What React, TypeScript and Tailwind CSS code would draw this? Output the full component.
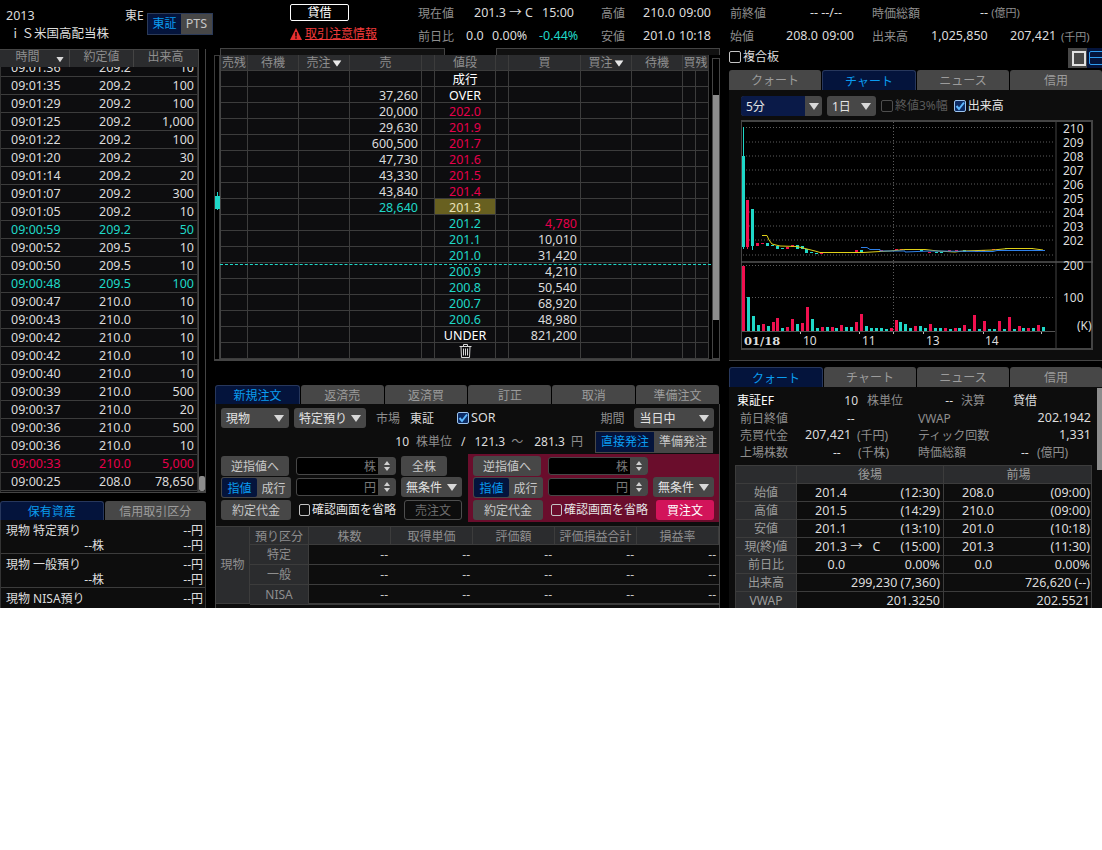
const RED = "text-[#e6004c]";
const TEAL = "text-[#1fd8c8]";

const ticks = [
  ["09:01:36", "209.2", "10"],
  ["09:01:35", "209.2", "100"],
  ["09:01:29", "209.2", "100"],
  ["09:01:25", "209.2", "1,000"],
  ["09:01:22", "209.2", "100"],
  ["09:01:20", "209.2", "30"],
  ["09:01:14", "209.2", "20"],
  ["09:01:07", "209.2", "300"],
  ["09:01:05", "209.2", "10"],
  ["09:00:59", "209.2", "50", "teal"],
  ["09:00:52", "209.5", "10"],
  ["09:00:50", "209.5", "10"],
  ["09:00:48", "209.5", "100", "teal"],
  ["09:00:47", "210.0", "10"],
  ["09:00:43", "210.0", "10"],
  ["09:00:42", "210.0", "10"],
  ["09:00:42", "210.0", "10"],
  ["09:00:40", "210.0", "10"],
  ["09:00:39", "210.0", "500"],
  ["09:00:37", "210.0", "20"],
  ["09:00:36", "210.0", "500"],
  ["09:00:36", "210.0", "10"],
  ["09:00:33", "210.0", "5,000", "red"],
  ["09:00:25", "208.0", "78,650"],
];

const board = [
  { sell: "", price: "成行", color: "text-white", buy: "" },
  { sell: "37,260", price: "OVER", color: "text-white", buy: "" },
  { sell: "20,000", price: "202.0", color: RED, buy: "" },
  { sell: "29,630", price: "201.9", color: RED, buy: "" },
  { sell: "600,500", price: "201.7", color: RED, buy: "" },
  { sell: "47,730", price: "201.6", color: RED, buy: "" },
  { sell: "43,330", price: "201.5", color: RED, buy: "" },
  { sell: "43,840", price: "201.4", color: RED, buy: "" },
  { sell: "28,640", sellColor: TEAL, price: "201.3", color: "text-[#e8e2b8]", buy: "", current: true },
  { sell: "", price: "201.2", color: TEAL, buy: "4,780", buyColor: RED },
  { sell: "", price: "201.1", color: TEAL, buy: "10,010" },
  { sell: "", price: "201.0", color: TEAL, buy: "31,420" },
  { sell: "", price: "200.9", color: TEAL, buy: "4,210" },
  { sell: "", price: "200.8", color: TEAL, buy: "50,540" },
  { sell: "", price: "200.7", color: TEAL, buy: "68,920" },
  { sell: "", price: "200.6", color: TEAL, buy: "48,980" },
  { sell: "", price: "UNDER", color: "text-white", buy: "821,200" },
  { sell: "", price: "", color: "", buy: "", trash: true },
];

// [height, red?]
const volumes: [number, number][] = [
  [65, 1], [34, 0], [15, 0], [6, 0], [7, 1], [5, 0], [9, 1], [13, 1], [3, 0], [4, 1], [12, 1], [7, 0], [8, 1], [24, 1], [12, 0], [3, 0],
  [4, 1], [4, 0], [4, 1], [3, 0], [6, 1], [4, 0], [4, 0], [9, 1], [17, 1], [5, 0], [3, 0], [3, 0], [3, 0], [2, 0], [3, 1], [11, 1],
  [9, 0], [7, 0], [3, 0], [5, 1], [5, 0], [3, 0], [7, 1], [3, 0], [3, 0], [3, 1], [2, 0], [3, 1], [3, 0], [6, 1], [2, 0], [16, 1],
  [2, 0], [10, 1], [2, 0], [2, 0], [10, 1], [2, 0], [14, 1], [2, 0], [5, 1], [3, 0], [3, 1], [3, 0], [6, 1], [4, 0],
];

// [x, y, h, red?]
const candles: [number, number, number, number][] = [
  [742, 156, 91, 0], [746, 200, 47, 1], [751, 209, 37, 0], [756, 243, 3, 1], [761, 243, 1, 1], [766, 243, 3, 0], [771, 245, 1, 0],
  [776, 246, 3, 0], [781, 248, 1, 0], [786, 247, 2, 1], [791, 245, 2, 1], [796, 245, 4, 0], [801, 246, 3, 0], [805, 249, 4, 0],
  [810, 252, 1, 0], [815, 253, 1, 0], [820, 252, 2, 1], [855, 250, 2, 1], [860, 250, 2, 0], [880, 250, 1, 1], [895, 249, 1, 1],
  [900, 249, 1, 1], [920, 250, 1, 0], [928, 252, 1, 1], [935, 252, 1, 0], [940, 252, 1, 0], [948, 250, 1, 1], [955, 250, 1, 1],
  [963, 250, 2, 0], [975, 251, 1, 1], [982, 250, 1, 1], [992, 249, 1, 1], [1005, 248, 1, 0], [1020, 248, 1, 0], [1030, 248, 1, 0],
];

const Caret = ({ className = "fill-[#d8d8d8]" }: { className?: string }) => (
  <svg width="10" height="7" viewBox="0 0 10 7" className={className}>
    <polygon points="0,0 10,0 5,7" />
  </svg>
);

const Tabs = ({ items, active, cls }: { items: string[]; active: number; cls: string }) => (
  <div className={`flex gap-[1px] ${cls}`}>
    {items.map((t, i) => (
      <div
        key={t}
        className={`flex-1 flex items-center justify-center pt-[2px] rounded-t-[3px] text-[12px] ${
          i === active ? "bg-[#04143c] border border-[#27375c] border-b-0 text-[#0a9cf0]" : "bg-[#474747] text-[#9c9c9c]"
        }`}
      >
        {t}
      </div>
    ))}
  </div>
);

const Check = ({ on, dim }: { on?: boolean; dim?: boolean }) => (
  <span
    className={`inline-flex items-center justify-center w-[12px] h-[12px] rounded-[2px] border ${
      on ? "border-[#9cc4ee] bg-[#0c2c66]" : dim ? "border-[#4e4e4e]" : "border-[#c4c4c4]"
    }`}
  >
    {on && (
      <svg width="10" height="10" viewBox="0 0 10 10" fill="none" stroke="#5cb8ff" strokeWidth="2">
        <path d="M1.5 5 L4 8 L9 1.5" />
      </svg>
    )}
  </span>
);

const Select = ({ label, cls }: { label: string; cls: string }) => (
  <div className={`flex items-center justify-between h-[20px] rounded-[3px] bg-[#474747] pl-[5px] pr-[5px] text-[12px] text-[#e4e4e4] ${cls}`}>
    <span className="pt-[2px]">{label}</span>
    <Caret />
  </div>
);

const Btn = ({ label, cls }: { label: string; cls: string }) => (
  <div className={`flex items-center justify-center pt-[2px] rounded-[3px] bg-[#474747] text-[12px] text-[#c8c8c8] ${cls}`}>{label}</div>
);

const Spin = ({ unit }: { unit: string }) => (
  <div className="flex w-[100px] h-[18px] rounded-[3px] border border-[#474747] bg-black">
    <span className="flex-1 pr-[2px] text-right text-[12px] leading-[17px] text-[#777]">{unit}</span>
    <span className="w-[17px] flex flex-col items-center justify-center gap-[2px] bg-[#474747]">
      <svg width="6" height="4" viewBox="0 0 6 4" className="fill-[#d0d0d0]">
        <polygon points="3,0 6,4 0,4" />
      </svg>
      <svg width="6" height="4" viewBox="0 0 6 4" className="fill-[#d0d0d0]">
        <polygon points="0,0 6,0 3,4" />
      </svg>
    </span>
  </div>
);

const OrderSide = ({ buy }: { buy?: boolean }) => (
  <div className={`grid grid-cols-[70px_100px_61px] gap-x-[5px] gap-y-[1px] grid-rows-[20px_21px_21px] ${buy ? "bg-[#6a0d2c] w-[251px] h-[68px] pl-[5px] pt-[2px]" : "w-[252px] h-[68px] pl-[5px] pt-[2px]"}`}>
    <Btn label="逆指値へ" cls="w-[68px] h-[20px]" />
    <div className="pt-[1px]">
      <Spin unit="株" />
    </div>
    {buy ? <div /> : <Btn label="全株" cls="w-[46px] h-[20px]" />}
    <div className="flex h-[21px] rounded-[3px] bg-[#474747] text-[12px] p-[1px]">
      <span className="w-[35px] flex items-center justify-center pt-[2px] rounded-[2px] bg-[#04143c] text-[#0a9cf0]">指値</span>
      <span className="flex-1 flex items-center justify-center pt-[2px] text-[#c8c8c8]">成行</span>
    </div>
    <div className="pt-[1px]">
      <Spin unit="円" />
    </div>
    <Select label="無条件" cls="w-[61px]" />
    <Btn label="約定代金" cls="h-[20px] mt-[1px]" />
    <div className="flex items-center gap-[2px] pl-[3px] text-[12px] text-[#e4e4e4] whitespace-nowrap">
      <Check />
      <span>確認画面を省略</span>
    </div>
    {buy ? (
      <Btn label="買注文" cls="!bg-[#d2145a] !text-white w-[58px] h-[20px] ml-[3px] mt-[1px]" />
    ) : (
      <div className="flex items-center justify-center pt-[2px] ml-[3px] w-[58px] h-[20px] mt-[1px] rounded-[3px] border border-[#4e4e4e] text-[12px] text-[#6e6e6e]">売注文</div>
    )}
  </div>
);

const QuoteRow = ({ label, a, aTime, b, bTime }: { label: string; a: string; aTime: string; b: string; bTime: string }) => (
  <div className="grid grid-cols-[61px_147px_149px] h-[18px] border-b border-[#3c3c3c] leading-[17px]">
    <div className="bg-[#2b2c2e] border-r border-[#3c3c3c] text-center text-[12px] text-[#9c9c9c]">{label}</div>
    <div className="flex justify-between border-r border-[#3c3c3c] pl-[18px] pr-[3px] text-[#dcdcdc] whitespace-pre">
      <span>{a}</span>
      <span>{aTime}</span>
    </div>
    <div className="flex justify-between pl-[18px] pr-[3px] text-[#dcdcdc]">
      <span>{b}</span>
      <span>{bTime}</span>
    </div>
  </div>
);

const Chart = () => (
  <svg width="352" height="230" viewBox="741 120 352 230" className="block">
    <rect x="741" y="121" width="351" height="228" fill="#000" stroke="#444" strokeWidth="2" />
    <line x1="1056" y1="120" x2="1056" y2="350" stroke="#444" />
    <line x1="741" y1="262" x2="1093" y2="262" stroke="#555" strokeWidth="1.5" />
    {[127.5, 142, 156, 170, 184, 198, 212, 226, 240, 255, 265.5, 297.5].map((y) => (
      <line key={y} x1="743" y1={y} x2="1055" y2={y} stroke="#5c5c5c" strokeDasharray="1 2" />
    ))}
    <line x1="893.5" y1="122" x2="893.5" y2="331" stroke="#5c5c5c" strokeDasharray="1 2" />
    <line x1="743.5" y1="127" x2="743.5" y2="249" stroke="#1fd8c8" />
    <line x1="747.5" y1="247" x2="747.5" y2="249" stroke="#f0104f" />
    <line x1="752.5" y1="246" x2="752.5" y2="250" stroke="#1fd8c8" />
    {candles.map(([x, y, h, r]) => (
      <rect key={x} x={x} y={y} width="3" height={h} fill={r ? "#f0104f" : "#1fd8c8"} />
    ))}
    <polyline
      fill="none"
      stroke="#e0d018"
      points="762,235.5 767,235.5 769,240 772,244 780,246 797,246.5 805,248.5 815,251 820,252.5 863,252.5 880,251.5 890,251 905,249.5 925,249.5 938,251 955,252 963,251 993,250 1008,248.5 1032,248.5 1043,250"
    />
    <polyline
      fill="none"
      stroke="#2f80e8"
      points="861,247.5 867,247.5 870,249.5 880,249.5 880,251 905,251 905,252 930,251 993,251.5 997,250.5 1045,250.5"
    />
    {volumes.map(([h, r], i) => (
      <rect key={i} x={742 + Math.round(i * 4.92)} y={331 - h} width="3" height={h} fill={r ? "#f0104f" : "#1fd8c8"} />
    ))}
    <line x1="742" y1="331.5" x2="1055" y2="331.5" stroke="#555" />
    {[800, 859, 893, 923, 983, 1041].map((x) => (
      <line key={x} x1={x + 0.5} y1="332" x2={x + 0.5} y2="334" stroke="#bbb" />
    ))}
    <g fill="#dcdcdc" fontSize="12">
      {[210, 209, 208, 207, 206, 205, 204, 203, 202].map((p, i) => (
        <text key={p} x="1063" y={132.5 + i * 14.1}>
          {p}
        </text>
      ))}
      <text x="1063" y="270">200</text>
      <text x="1063" y="302">100</text>
      <text x="1077" y="330">(K)</text>
      <text x="803" y="345">10</text>
      <text x="862" y="345">11</text>
      <text x="926" y="345">13</text>
      <text x="985" y="345">14</text>
      <text x="744" y="345" fontWeight="700" fontFamily="'DejaVu Serif', serif" fontSize="11.5">01/18</text>
    </g>
  </svg>
);

export default function App() {
  return (
    <div className="min-h-[850px] bg-white font-['Noto_Sans','Noto_Sans_CJK_JP',sans-serif] text-[12.5px] leading-none">
      <div className="h-[608px] overflow-hidden bg-black text-[#dcdcdc]">
        {/* top info */}
        <div className="flex h-[48px]">
          <div className="w-[125px] pl-[6px] pt-[10px]">
            <div className="h-[18px]">2013</div>
            <div className="pl-[3px] text-[12.5px] whitespace-nowrap">ｉＳ米国高配当株</div>
          </div>
          <div className="w-[22px] pt-[10px] text-[12px] whitespace-nowrap">東E</div>
          <div className="mt-[13px] flex w-[66px] h-[22px] bg-[#474747] border border-[#2b3a58]">
            <span className="w-[33px] flex items-center justify-center bg-[#04143c] text-[#0a9cf0] text-[12px]">東証</span>
            <span className="flex-1 flex items-center justify-center text-[#c8c8c8]">PTS</span>
          </div>
          <div className="w-[128px] ml-[77px] pt-[4px]">
            <div className="w-[59px] h-[17px] flex items-center justify-center rounded-[2px] border border-white text-[12px] text-white">貸借</div>
            <div className="flex items-center gap-[3px] mt-[7px] whitespace-nowrap">
              <svg width="12" height="12" viewBox="0 0 12 12">
                <polygon points="6,0 12,12 0,12" fill="#e83030" />
                <rect x="5.3" y="4" width="1.4" height="4.5" fill="#000" />
                <rect x="5.3" y="9.3" width="1.4" height="1.4" fill="#000" />
              </svg>
              <span className="text-[12px] text-[#f03a3a] underline">取引注意情報</span>
            </div>
          </div>
          <div className="flex-1 pt-[2px] whitespace-nowrap">
            <div className="flex h-[23px] items-center">
              <span className="w-[56px] text-[12px] text-[#8e8e8e]">現在値</span>
              <span className="w-[68px]">201.3 → C</span>
              <span className="w-[59px]">15:00</span>
              <span className="w-[42px] text-[12px] text-[#8e8e8e]">高値</span>
              <span className="w-[36px]">210.0</span>
              <span className="w-[51px]">09:00</span>
              <span className="w-[80px] text-[12px] text-[#8e8e8e]">前終値</span>
              <span className="w-[62px]">-- --/--</span>
              <span className="w-[108px] text-[12px] text-[#8e8e8e]">時価総額</span>
              <span>-- <span className="text-[11px] text-[#8e8e8e]">(億円)</span></span>
            </div>
            <div className="flex h-[23px] items-center">
              <span className="w-[48px] text-[12px] text-[#8e8e8e]">前日比</span>
              <span className="w-[26px]">0.0</span>
              <span className="w-[47px]">0.00%</span>
              <span className={`w-[62px] ${TEAL}`}>-0.44%</span>
              <span className="w-[42px] text-[12px] text-[#8e8e8e]">安値</span>
              <span className="w-[36px]">201.0</span>
              <span className="w-[51px]">10:18</span>
              <span className="w-[56px] text-[12px] text-[#8e8e8e]">始値</span>
              <span className="w-[36px]">208.0</span>
              <span className="w-[50px]">09:00</span>
              <span className="w-[59px] text-[12px] text-[#8e8e8e]">出来高</span>
              <span className="w-[79px]">1,025,850</span>
              <span className="w-[51px]">207,421</span>
              <span className="text-[11px] text-[#8e8e8e]">(千円)</span>
            </div>
          </div>
        </div>

        <div className="flex">
          {/* ticks + holdings */}
          <div className="w-[206px] shrink-0">
            <div className="mt-[1px] flex h-[444px] border-b-2 border-[#444]">
              <div className="w-[198px]">
                <div className="grid grid-cols-[70px_64px_63px] h-[18px] bg-[#2b2c2e] text-[12px] text-[#8e8e8e] border-t border-[#444]">
                  <div className="relative flex items-center justify-center pr-[14px] pb-[3px] border-r border-[#444]">
                    時間
                    <span className="absolute right-[4px] top-[6px]">
                      <Caret className="fill-[#d8d8d8] scale-75" />
                    </span>
                  </div>
                  <div className="flex items-center justify-center pb-[3px] border-r border-[#444]">約定値</div>
                  <div className="flex items-center justify-center pb-[3px]">出来高</div>
                </div>
                <div className="h-[425px] overflow-hidden bg-[#0d0d0f] border-l border-r border-[#333]">
                  {ticks.map((t, i) => (
                    <div
                      key={i}
                      className={`flex items-center h-[18px] border-b border-[#3c3c3c] pt-[2px] pl-[10px] pr-[3px] ${i === 0 ? "-mt-[8px]" : ""} ${
                        t[3] === "teal" ? TEAL : t[3] === "red" ? RED : "text-[#dcdcdc]"
                      }`}
                    >
                      <span className="w-[60px]">{t[0]}</span>
                      <span className="w-[60px] text-right">{t[1]}</span>
                      <span className="flex-1 text-right">{t[2]}</span>
                    </div>
                  ))}
                </div>
              </div>
              <div className="w-[8px] flex flex-col justify-end border-x border-[#444] bg-black">
                <div className="h-[15px] bg-[#8c8c8c] rounded-[2px]" />
              </div>
            </div>
            <Tabs items={["保有資産", "信用取引区分"]} active={0} cls="mt-[8px] h-[19px]" />
            <div className="h-[88px] bg-[#0d0d0d] border-l border-r border-[#333] text-[12px]">
              {["現物 特定預り", "現物 一般預り", "現物 NISA預り"].map((n, i) => (
                <div key={n} className={`pt-[2px] ${i < 2 ? "h-[34px] border-b border-[#3c3c3c]" : ""}`}>
                  <div className="flex justify-between h-[17px] items-center pl-[5px] pr-[2px]">
                    <span>{n}</span>
                    <span>--円</span>
                  </div>
                  {i < 2 && (
                    <div className="flex h-[14px] items-center pr-[2px]">
                      <span className="w-[103px] text-right">--株</span>
                      <span className="flex-1 text-right">--円</span>
                    </div>
                  )}
                </div>
              ))}
            </div>
          </div>

          {/* board + order */}
          <div className="w-[506px] ml-[8px] shrink-0">
            <div className="flex h-[7px]">
              <div className="ml-[6px] w-[225px] border-t border-x border-[#444] bg-[#111]" />
              <div className="ml-[51px] w-[224px] border-t border-x border-[#444] bg-[#111]" />
            </div>
            <div className="relative flex h-[306px] border-b-2 border-[#444]">
              <div className="relative w-[6px] border-x border-t border-[#3c3c3c]">
                <div className="absolute left-0 top-[140px] w-[5px] h-[13px] bg-[#1fd8c8]" />
                <div className="absolute left-[2px] top-[136px] w-[1px] h-[18px] bg-[#1fd8c8]" />
              </div>
              <div className="w-[488px] bg-[#0d0d0f] border-l border-[#444]">
                <div className="grid grid-cols-[27px_51px_51px_72px_13px_61px_13px_72px_51px_51px_26px] grid-rows-[16px] h-[16px] bg-[#2b2c2e] text-[12px] text-[#8e8e8e] text-center">
                  {["売残", "待機", "売注", "売", "", "値段", "", "買", "買注", "待機", "買残"].map((h, i) => (
                    <div key={i} className="flex items-center justify-center gap-[1px] pt-[1px] border-r border-b border-[#3c3c3c]">
                      {h}
                      {(h === "売注" || h === "買注") && <Caret className="fill-[#e8e8e8] scale-90" />}
                    </div>
                  ))}
                </div>
                {board.map((r, i) => (
                  <div key={i} className="grid grid-cols-[27px_51px_51px_72px_13px_61px_13px_72px_51px_51px_13px_13px] grid-rows-[16px] h-[16px]">
                    <div className="border-r border-b border-[#3c3c3c]" />
                    <div className="border-r border-b border-[#3c3c3c]" />
                    <div className="border-r border-b border-[#3c3c3c]" />
                    <div className={`border-r border-b border-[#3c3c3c] pr-[3px] text-right leading-[18px] ${r.sellColor ?? "text-[#dcdcdc]"}`}>{r.sell}</div>
                    <div className="border-r border-b border-[#3c3c3c]" />
                    <div className={`flex justify-center border-r border-b border-[#3c3c3c] ${r.trash ? "items-center" : "items-start leading-[18px]"} ${r.color} ${r.current ? "bg-[#686020]" : ""}`}>
                      {r.trash ? (
                        <svg width="13" height="14" viewBox="0 0 13 14" fill="none" stroke="#d8d8d8">
                          <path d="M0.5 2.5 H12.5 M4.5 2.5 V0.5 H8.5 V2.5 M2 2.5 L2.5 13.5 H10.5 L11 2.5 M4.5 4.5 V11.5 M6.5 4.5 V11.5 M8.5 4.5 V11.5" />
                        </svg>
                      ) : (
                        r.price
                      )}
                    </div>
                    <div className="border-r border-b border-[#3c3c3c]" />
                    <div className={`border-r border-b border-[#3c3c3c] pr-[3px] text-right leading-[18px] ${r.buyColor ?? "text-[#dcdcdc]"}`}>{r.buy}</div>
                    <div className="border-r border-b border-[#3c3c3c]" />
                    <div className="border-r border-b border-[#3c3c3c]" />
                    <div className="border-r border-b border-[#3c3c3c]" />
                    <div className="border-r border-b border-[#3c3c3c]" />
                  </div>
                ))}
              </div>
              <div className="ml-[4px] w-[8px] mt-[3px] border border-[#444] bg-black">
                <div className="mt-[36px] h-[225px] bg-[#8c8c8c]" />
              </div>
              <div className="absolute left-[6px] top-[209px] w-[491px] border-t border-dashed border-[#1fd8c8]" />
            </div>

            <Tabs items={["新規注文", "返済売", "返済買", "訂正", "取消", "準備注文"]} active={0} cls="mt-[24px] ml-[1px] mr-[1px] h-[19px]" />
            <div className="ml-[1px] h-[204px] bg-[#0d0d0d] border-x border-[#444] text-[12px]">
              <div className="flex items-center h-[26px] pl-[5px] pt-[2px]">
                <Select label="現物" cls="w-[68px]" />
                <Select label="特定預り" cls="w-[72px] ml-[5px]" />
                <span className="ml-[10px] pt-[2px] text-[#8e8e8e]">市場</span>
                <span className="ml-[10px] pt-[2px] text-[#dcdcdc]">東証</span>
                <span className="ml-[23px] flex">
                  <Check on />
                </span>
                <span className="ml-[2px] text-[12.5px]">SOR</span>
                <span className="ml-[105px] pt-[2px] text-[#8e8e8e]">期間</span>
                <Select label="当日中" cls="w-[80px] ml-[10px]" />
              </div>
              <div className="flex items-center h-[24px] whitespace-nowrap">
                <span className="w-[193px] text-right">10</span>
                <span className="ml-[7px] text-[#8e8e8e]">株単位</span>
                <span className="ml-[9px]">/</span>
                <span className="ml-[9px]">121.3</span>
                <span className="ml-[6px] text-[#8e8e8e]">～</span>
                <span className="ml-[11px]">281.3</span>
                <span className="ml-[6px] text-[#8e8e8e]">円</span>
                <div className="ml-[12px] flex w-[118px] h-[22px] bg-[#474747] p-[1px]">
                  <span className="w-[58px] flex items-center justify-center bg-[#04143c] text-[#0a9cf0]">直接発注</span>
                  <span className="flex-1 flex items-center justify-center text-[#c8c8c8]">準備発注</span>
                </div>
              </div>
              <div className="flex mt-[0px]">
                <OrderSide />
                <OrderSide buy />
              </div>
              <div className="mt-[4px] flex border-t border-b border-[#3c3c3c] h-[78px]">
                <div className="w-[35px] flex items-center justify-center bg-[#2b2c2e] border-r border-[#3c3c3c] text-[#8e8e8e]">現物</div>
                <div className="flex-1">
                  <div className="grid grid-cols-[59px_82px_82px_82px_82px_82px] grid-rows-[18px] h-[18px] bg-[#2b2c2e] text-[#8e8e8e] text-center leading-[19px]">
                    {["預り区分", "株数", "取得単価", "評価額", "評価損益合計", "損益率"].map((h) => (
                      <div key={h} className="border-r border-b border-[#3c3c3c]">{h}</div>
                    ))}
                  </div>
                  {["特定", "一般", "NISA"].map((n) => (
                    <div key={n} className="grid grid-cols-[59px_82px_82px_82px_82px_82px] grid-rows-[20px] h-[20px] leading-[20px]">
                      <div className="bg-[#2b2c2e] border-r border-b border-[#3c3c3c] text-center text-[#8e8e8e]">{n}</div>
                      {[0, 1, 2, 3, 4].map((c) => (
                        <div key={c} className="border-b border-[#3c3c3c] pr-[3px] text-right text-[#c8c8c8]">--</div>
                      ))}
                    </div>
                  ))}
                </div>
              </div>
            </div>
          </div>

          {/* right column */}
          <div className="ml-[9px] w-[373px] shrink-0">
            <div className="flex items-start justify-between h-[22px]">
              <div className="flex items-center gap-[2px] mt-[3px] text-[12px]">
                <Check />
                <span>複合板</span>
              </div>
              <div className="flex w-[34px] h-[20px] bg-[#474747] items-center pl-[4px] overflow-hidden">
                <span className="w-[14px] h-[15px] shrink-0 border-2 border-[#e0e0e0]" />
                <span className="ml-[1px] w-[20px] h-[20px] shrink-0 bg-[#04143c] pl-[2px] pt-[3px]">
                  <span className="block w-[20px] h-[14px] border border-[#2f9cf0] rounded-[2px] relative">
                    <span className="absolute left-0 right-0 top-[5px] border-t border-[#2f9cf0]" />
                  </span>
                </span>
              </div>
            </div>
            <Tabs items={["クォート", "チャート", "ニュース", "信用"]} active={1} cls="h-[20px]" />
            <div className="h-[271px] bg-[#0d0d0d] border-b border-[#444] pl-[12px] pt-[6px]">
              <div className="flex items-center h-[20px] text-[12px]">
                <div className="flex w-[81px] h-[20px] rounded-[3px] bg-[#474747]">
                  <span className="w-[64px] flex items-center pl-[5px] pt-[2px] rounded-l-[3px] bg-[#0a1a48] text-[#e4e4e4]">5分</span>
                  <span className="flex-1 flex items-center justify-center">
                    <Caret />
                  </span>
                </div>
                <Select label="1日" cls="w-[49px] ml-[5px]" />
                <span className="ml-[5px] flex">
                  <Check dim />
                </span>
                <span className="ml-[2px] text-[#5a5a5a]">終値3%幅</span>
                <span className="ml-[6px] flex">
                  <Check on />
                </span>
                <span className="ml-[2px] text-[#e4e4e4]">出来高</span>
              </div>
              <div className="mt-[4px]">
                <Chart />
              </div>
            </div>
            <Tabs items={["クォート", "チャート", "ニュース", "信用"]} active={0} cls="mt-[6px] h-[20px]" />
            <div className="relative h-[221px] bg-[#0d0d0d] text-[12px] pt-[5px]">
              <div className="flex h-[17px] items-center pl-[8px] whitespace-nowrap">
                <span className="w-[90px] text-white">東証EF</span>
                <span className="w-[31px] text-right">10</span>
                <span className="ml-[9px] w-[68px] text-[#8e8e8e]">株単位</span>
                <span className="w-[18px] text-right">--</span>
                <span className="ml-[8px] w-[52px] text-[#8e8e8e]">決算</span>
                <span>貸借</span>
              </div>
              <div className="flex h-[17px] items-center pt-[2px] pl-[11px] pr-[11px] whitespace-nowrap">
                <span className="w-[107px] text-[#8e8e8e]">前日終値</span>
                <span className="w-[71px]">--</span>
                <span className="w-[90px] text-[#8e8e8e]">VWAP</span>
                <span className="flex-1 text-right text-[12.5px]">202.1942</span>
              </div>
              <div className="flex h-[17px] items-center pt-[2px] pl-[11px] pr-[11px] whitespace-nowrap">
                <span className="w-[65px] text-[#8e8e8e]">売買代金</span>
                <span className="w-[52px] text-[12.5px]">207,421</span>
                <span className="w-[61px] text-[#8e8e8e]">(千円)</span>
                <span className="w-[90px] text-[#8e8e8e]">ティック回数</span>
                <span className="flex-1 text-right text-[12.5px]">1,331</span>
              </div>
              <div className="flex h-[17px] items-center pt-[2px] pl-[11px] whitespace-nowrap">
                <span className="w-[93px] text-[#8e8e8e]">上場株数</span>
                <span className="w-[25px]">--</span>
                <span className="w-[60px] text-[#8e8e8e]">(千株)</span>
                <span className="w-[103px] text-[#8e8e8e]">時価総額</span>
                <span className="w-[16px]">--</span>
                <span className="text-[#8e8e8e]">(億円)</span>
              </div>
              <div className="mt-[5px] ml-[6px] w-[357px] border-t border-l border-r border-[#3c3c3c] text-[12.5px]">
                <div className="grid grid-cols-[61px_147px_149px] h-[18px] bg-[#2b2c2e] border-b border-[#3c3c3c] text-center text-[12px] text-[#9c9c9c] leading-[17px]">
                  <div className="border-r border-[#3c3c3c]" />
                  <div className="border-r border-[#3c3c3c]">後場</div>
                  <div>前場</div>
                </div>
                <QuoteRow label="始値" a="201.4" aTime="(12:30)" b="208.0" bTime="(09:00)" />
                <QuoteRow label="高値" a="201.5" aTime="(14:29)" b="210.0" bTime="(09:00)" />
                <QuoteRow label="安値" a="201.1" aTime="(13:10)" b="201.0" bTime="(10:18)" />
                <QuoteRow label="現(終)値" a="201.3 →   C" aTime="(15:00)" b="201.3" bTime="(11:30)" />
                <QuoteRow label="前日比" a="　0.0" aTime="0.00%" b="　0.0" bTime="0.00%" />
                <QuoteRow label="出来高" a="" aTime="299,230 (7,360)" b="" bTime="726,620 (--)" />
                <QuoteRow label="VWAP" a="" aTime="201.3250" b="" bTime="202.5521" />
              </div>
              <div className="absolute right-0 top-[1px] w-[5px] h-[82px] bg-[#8c8c8c]" />
            </div>
          </div>
        </div>
      </div>
    </div>
  );
}
